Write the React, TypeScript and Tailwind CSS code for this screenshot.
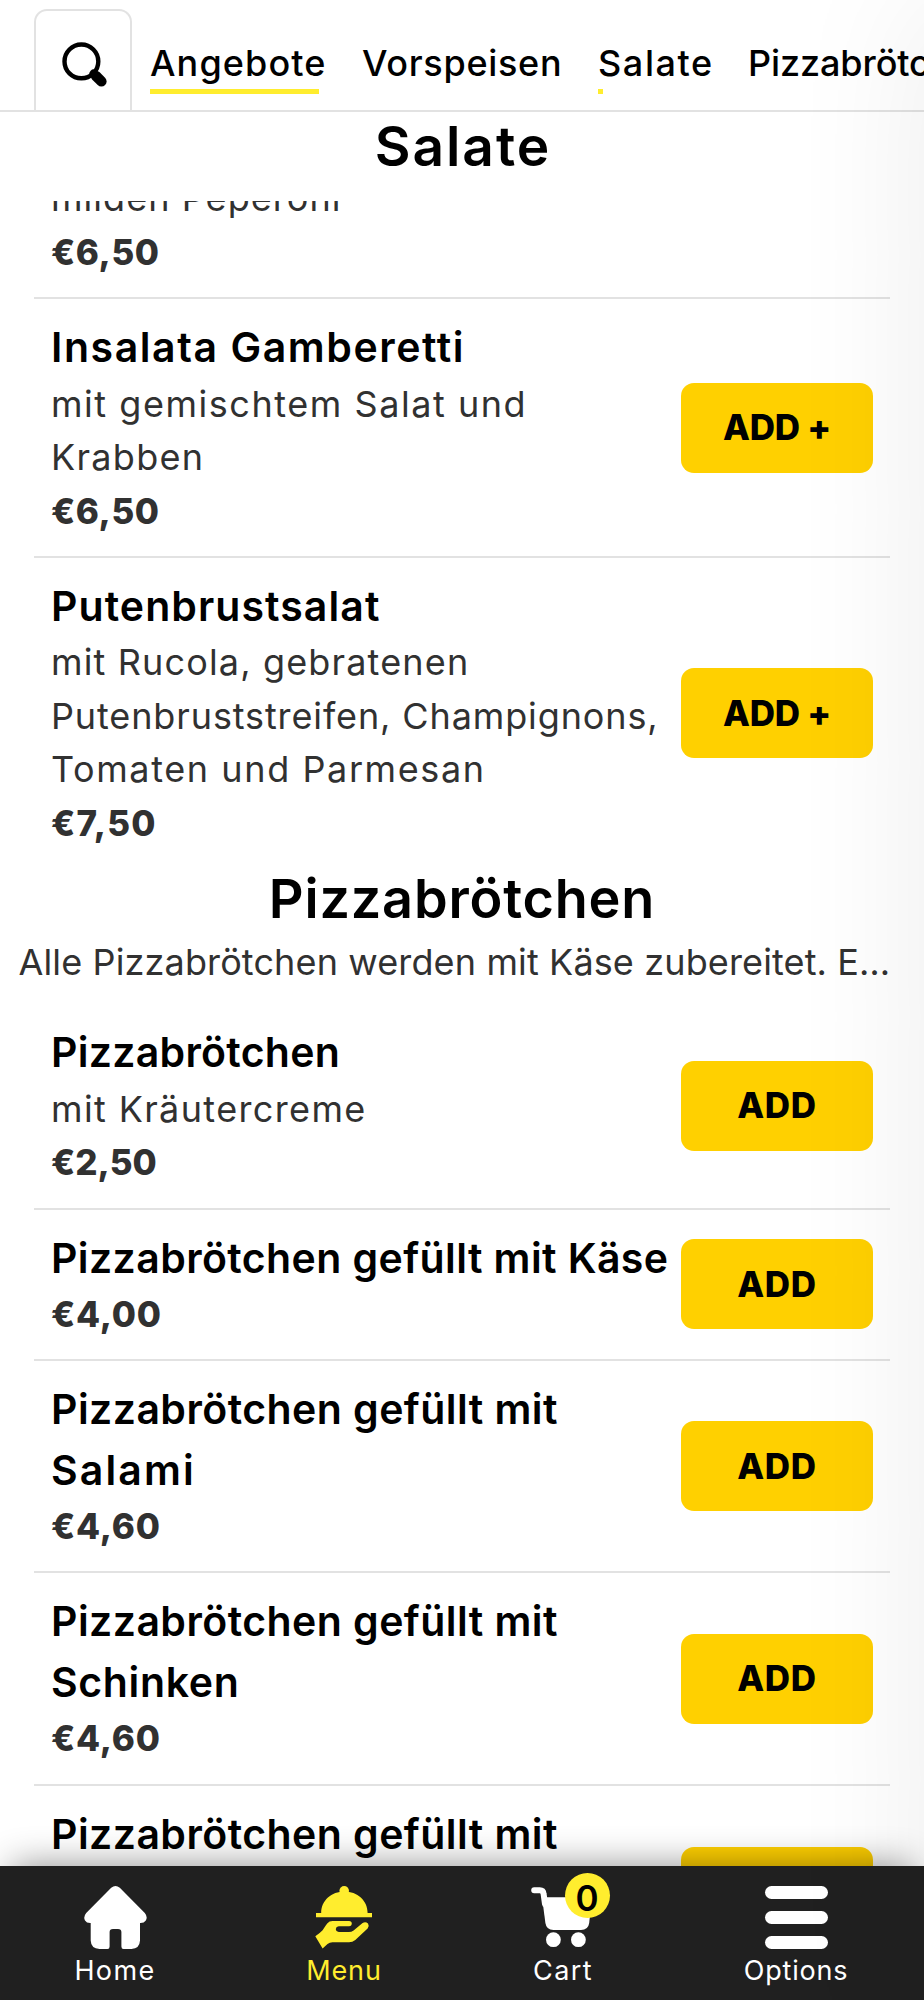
import React from 'react';

type Line = { text: string; tracking: string };
type Item = { names: Line[]; details?: Line[]; price: Line; customizable?: boolean };

const salads: Item[] = [
  {
    names: [{ text: 'Insalata Gamberetti', tracking: 'tracking-[1.57px]' }],
    details: [
      { text: 'mit gemischtem Salat und', tracking: 'tracking-[1.54px]' },
      { text: 'Krabben', tracking: 'tracking-[1.3px]' },
    ],
    price: { text: '€6,50', tracking: 'tracking-[0.6px]' },
    customizable: true,
  },
  {
    names: [{ text: 'Putenbrustsalat', tracking: 'tracking-[1.07px]' }],
    details: [
      { text: 'mit Rucola, gebratenen', tracking: 'tracking-[1.15px]' },
      { text: 'Putenbruststreifen, Champignons,', tracking: 'tracking-[0.88px]' },
      { text: 'Tomaten und Parmesan', tracking: 'tracking-[1.6px]' },
    ],
    price: { text: '€7,50', tracking: 'tracking-[1.2px]' },
    customizable: true,
  },
];

const rolls: Item[] = [
  {
    names: [{ text: 'Pizzabrötchen', tracking: 'tracking-[0.28px]' }],
    details: [{ text: 'mit Kräutercreme', tracking: 'tracking-[1.37px]' }],
    price: { text: '€2,50', tracking: 'tracking-normal' },
  },
  {
    names: [{ text: 'Pizzabrötchen gefüllt mit Käse', tracking: 'tracking-[0.41px]' }],
    price: { text: '€4,00', tracking: 'tracking-[0.8px]' },
  },
  {
    names: [
      { text: 'Pizzabrötchen gefüllt mit', tracking: 'tracking-[0.45px]' },
      { text: 'Salami', tracking: 'tracking-[2.1px]' },
    ],
    price: { text: '€4,60', tracking: 'tracking-[0.8px]' },
  },
  {
    names: [
      { text: 'Pizzabrötchen gefüllt mit', tracking: 'tracking-[0.45px]' },
      { text: 'Schinken', tracking: 'tracking-[0.65px]' },
    ],
    price: { text: '€4,60', tracking: 'tracking-[0.8px]' },
  },
];

function NameLine({ line }: { line: Line }) {
  return (
    <span className={`block text-[41px] font-semibold leading-[60.3px] whitespace-nowrap text-black ${line.tracking}`}>
      {line.text}
    </span>
  );
}

function Price({ line }: { line: Line }) {
  return <p className={`text-[35px] font-extrabold leading-[53.5px] whitespace-nowrap ${line.tracking}`}>{line.text}</p>;
}

function AddButton({ customizable }: { customizable?: boolean }) {
  return (
    <button
      className={`h-[90px] w-48 shrink-0 rounded-[13px] bg-[#ffd000] text-center text-[35px] font-extrabold leading-[89px] text-black ${
        customizable ? 'tracking-[-0.2px]' : 'tracking-[0.6px]'
      }`}
    >
      {customizable ? 'ADD +' : 'ADD'}
    </button>
  );
}

function ItemRow({ item, last }: { item: Item; last?: boolean }) {
  return (
    <li
      className={`flex items-center justify-between pt-[18px] pr-[17px] pb-[18px] pl-[17px] ${
        last ? '' : 'border-b-2 border-[#e2e2e2]'
      }`}
    >
      <div className="w-0 grow">
        <h3>
          {item.names.map((n) => (
            <NameLine key={n.text} line={n} />
          ))}
        </h3>
        {item.details?.map((d) => (
          <span key={d.text} className={`block text-[36px] leading-[53.5px] whitespace-nowrap ${d.tracking}`}>
            {d.text}
          </span>
        ))}
        <Price line={item.price} />
      </div>
      <AddButton customizable={item.customizable} />
    </li>
  );
}

function SearchIcon() {
  return (
    <svg viewBox="0 0 46 46" className="h-[46px] w-[46px]" fill="none" stroke="black" strokeLinecap="round">
      <circle cx="19.4" cy="19.4" r="16.9" strokeWidth="4.4" />
      <path d="M31.5 31.5l8 8" strokeWidth="8" />
      <path d="M34 34l5.4 5.4" strokeWidth="10.4" />
    </svg>
  );
}

function HomeIcon() {
  return (
    <svg viewBox="0 0 63 63" className="h-[63px] w-[63px]" fill="currentColor">
      <path d="M27.2 1.8Q31.5-1.6 35.8 1.8L60.8 27Q64 31 61.8 34.4Q60 37.2 56 37V54.5Q55.6 62.6 47.5 63H39.5Q37.4 63 37.4 60.5V46Q37.4 43 34 43H29Q25.6 43 25.6 46V60.5Q25.6 63 23.5 63H15.5Q7 62.6 6.7 54.5V37Q2.6 37.2 1 34.4Q-1 31 2.2 27Z" />
    </svg>
  );
}

function DishIcon() {
  return (
    <svg viewBox="0 0 58 63" className="h-[63px] w-[58px]" fill="currentColor">
      <circle cx="29.2" cy="4.8" r="4.8" />
      <path d="M6.2 27C6.2 14.5 16.5 5.5 29.4 5.5S52.6 14.5 52.6 27H57V31.2H1V27Z" />
      <path d="M.3 50.2L7.6 62.5L12.5 58Q14.6 56.3 17.5 56.3H34Q37.5 56.3 40.3 54L52.6 42.6Q54.6 40 53 37.6Q50.6 35 47.6 37L38.6 44.4Q36.5 46 33.8 46H23.8Q20.8 45.6 20.8 43.1Q21 40.6 23.8 40.3H34Q36.8 40 36.8 37.6Q36.8 35.2 34 35H17.5Q14.3 35 12.2 37.4Q10.6 39.4 7.6 44.2Q5 47 .3 50.2Z" />
    </svg>
  );
}

function CartIcon() {
  return (
    <svg viewBox="0 0 66 63" className="h-[63px] w-[66px]" fill="currentColor">
      <path d="M4.2 4.3H9.8Q13.2 4.3 13.6 8L15 18" fill="none" stroke="currentColor" strokeWidth="6" strokeLinecap="round" />
      <path d="M12 11.3H62L59.2 37Q58.2 44 51 44H23.5Q16.4 44 15.4 37Z" />
      <circle cx="23.4" cy="53.7" r="7.4" />
      <circle cx="48.4" cy="53.7" r="7.4" />
    </svg>
  );
}

function BarsIcon() {
  return (
    <div className="flex h-[63px] w-[63px] flex-col justify-between">
      <span className="h-[13px] rounded-full bg-white" />
      <span className="h-[13px] rounded-full bg-white" />
      <span className="h-[13px] rounded-full bg-white" />
    </div>
  );
}

function Tab({ width, color, label, children }: { width: string; color: string; label: Line; children: React.ReactNode }) {
  return (
    <a className={`flex flex-col items-center pt-5 ${width} ${color}`}>
      {children}
      <span className={`mt-0.5 text-[27px] leading-[39px] ${label.tracking}`}>{label.text}</span>
    </a>
  );
}

export default function App() {
  return (
    <div className="relative flex h-[2000px] w-[924px] flex-col overflow-hidden bg-white font-['Inter',sans-serif] text-[#313131]">
      <header className="flex h-[112px] shrink-0 border-b-2 border-[#e2e2e2] pt-[9px] text-black">
        <div className="ml-[34px] h-[101px] w-[98px] shrink-0 rounded-t-[13px] border-2 border-b-0 border-[#e2e2e2] pt-[31px] pl-[26px]">
          <SearchIcon />
        </div>
        <nav className="ml-[18px] flex text-[36px] font-medium leading-[54px] whitespace-nowrap">
          <a className="w-[212px] shrink-0 pt-[27px]">
            <span className="tracking-[1.1px]">Angebote</span>
            <span className="-mt-px block h-[5px] w-[169px] bg-[#ffed2e]" />
          </a>
          <a className="w-[236px] shrink-0 pt-[27px] tracking-[0.7px]">Vorspeisen</a>
          <a className="w-[150px] shrink-0 pt-[27px]">
            <span className="tracking-[1.6px]">Salate</span>
            <span className="-mt-px block size-[5px] bg-[#ffed2e]" />
          </a>
          <a className="shrink-0 pt-[27px] tracking-[-0.1px]">Pizzabrötchen</a>
        </nav>
      </header>

      <h2 className="h-[89px] shrink-0 pt-[4px] pl-[2px] text-center text-[55px] font-semibold leading-[61px] tracking-[2px] text-black">
        Salate
      </h2>

      <main className="h-[1665px] shrink-0 overflow-hidden">
        <section className="-mt-[28.7px] pr-[34px] pl-[34px]">
          <div className="border-b-2 border-[#e2e2e2] pb-[18px] pl-[17px]">
            <span className="block text-[36px] leading-[53.5px] tracking-[1.05px]">milden Peperoni</span>
            <Price line={{ text: '€6,50', tracking: 'tracking-[0.6px]' }} />
          </div>
          <ul>
            {salads.map((item, i) => (
              <ItemRow key={item.names[0].text} item={item} last={i === salads.length - 1} />
            ))}
          </ul>
        </section>

        <h2 className="text-center text-[54px] font-semibold leading-[61px] tracking-[0.8px] text-black">
          Pizzabrötchen
        </h2>
        <p className="mt-[7px] pl-[18.5px] text-[36px] leading-[53px] tracking-[0.13px] whitespace-nowrap">
          Alle Pizzabrötchen werden mit Käse zubereitet. E…
        </p>

        <section className="px-[34px] pt-[14.9px]">
          <ul>
            {rolls.map((item) => (
              <ItemRow key={item.names.map((n) => n.text).join(' ')} item={item} />
            ))}
            <li className="flex h-[212px] items-center justify-between pr-[17px] pl-[17px]">
              <div className="w-0 grow self-start pt-[18px]">
                <NameLine line={{ text: 'Pizzabrötchen gefüllt mit', tracking: 'tracking-[0.45px]' }} />
              </div>
              <div className="h-[90px] w-48 rounded-[13px] bg-[#ffd000]" />
            </li>
          </ul>
        </section>
      </main>

      <footer className="relative flex h-[134px] shrink-0 bg-[#202020] text-white shadow-[0_-12px_36px_-12px_rgba(0,0,0,0.45)]">
        <Tab width="w-[230px]" color="text-white" label={{ text: 'Home', tracking: 'tracking-[1.4px]' }}>
          <HomeIcon />
        </Tab>
        <Tab width="w-[228px]" color="text-[#ffed2e]" label={{ text: 'Menu', tracking: 'tracking-[0.9px]' }}>
          <DishIcon />
        </Tab>
        <Tab width="w-[210px]" color="text-white" label={{ text: 'Cart', tracking: 'tracking-[1.4px]' }}>
          <div className="relative">
            <CartIcon />
            <span className="absolute -top-[13.5px] left-[34.5px] flex size-[45px] items-center justify-center rounded-full bg-[#ffed2e] pt-[6px] text-[35px] font-semibold leading-none text-black">
              0
            </span>
          </div>
        </Tab>
        <Tab width="w-[256px]" color="text-white" label={{ text: 'Options', tracking: 'tracking-[0.8px]' }}>
          <BarsIcon />
        </Tab>
      </footer>

      <div className="pointer-events-none absolute top-0 left-full h-full w-[400px] shadow-[0_0_142px_rgba(0,0,0,0.08)]" />
    </div>
  );
}
